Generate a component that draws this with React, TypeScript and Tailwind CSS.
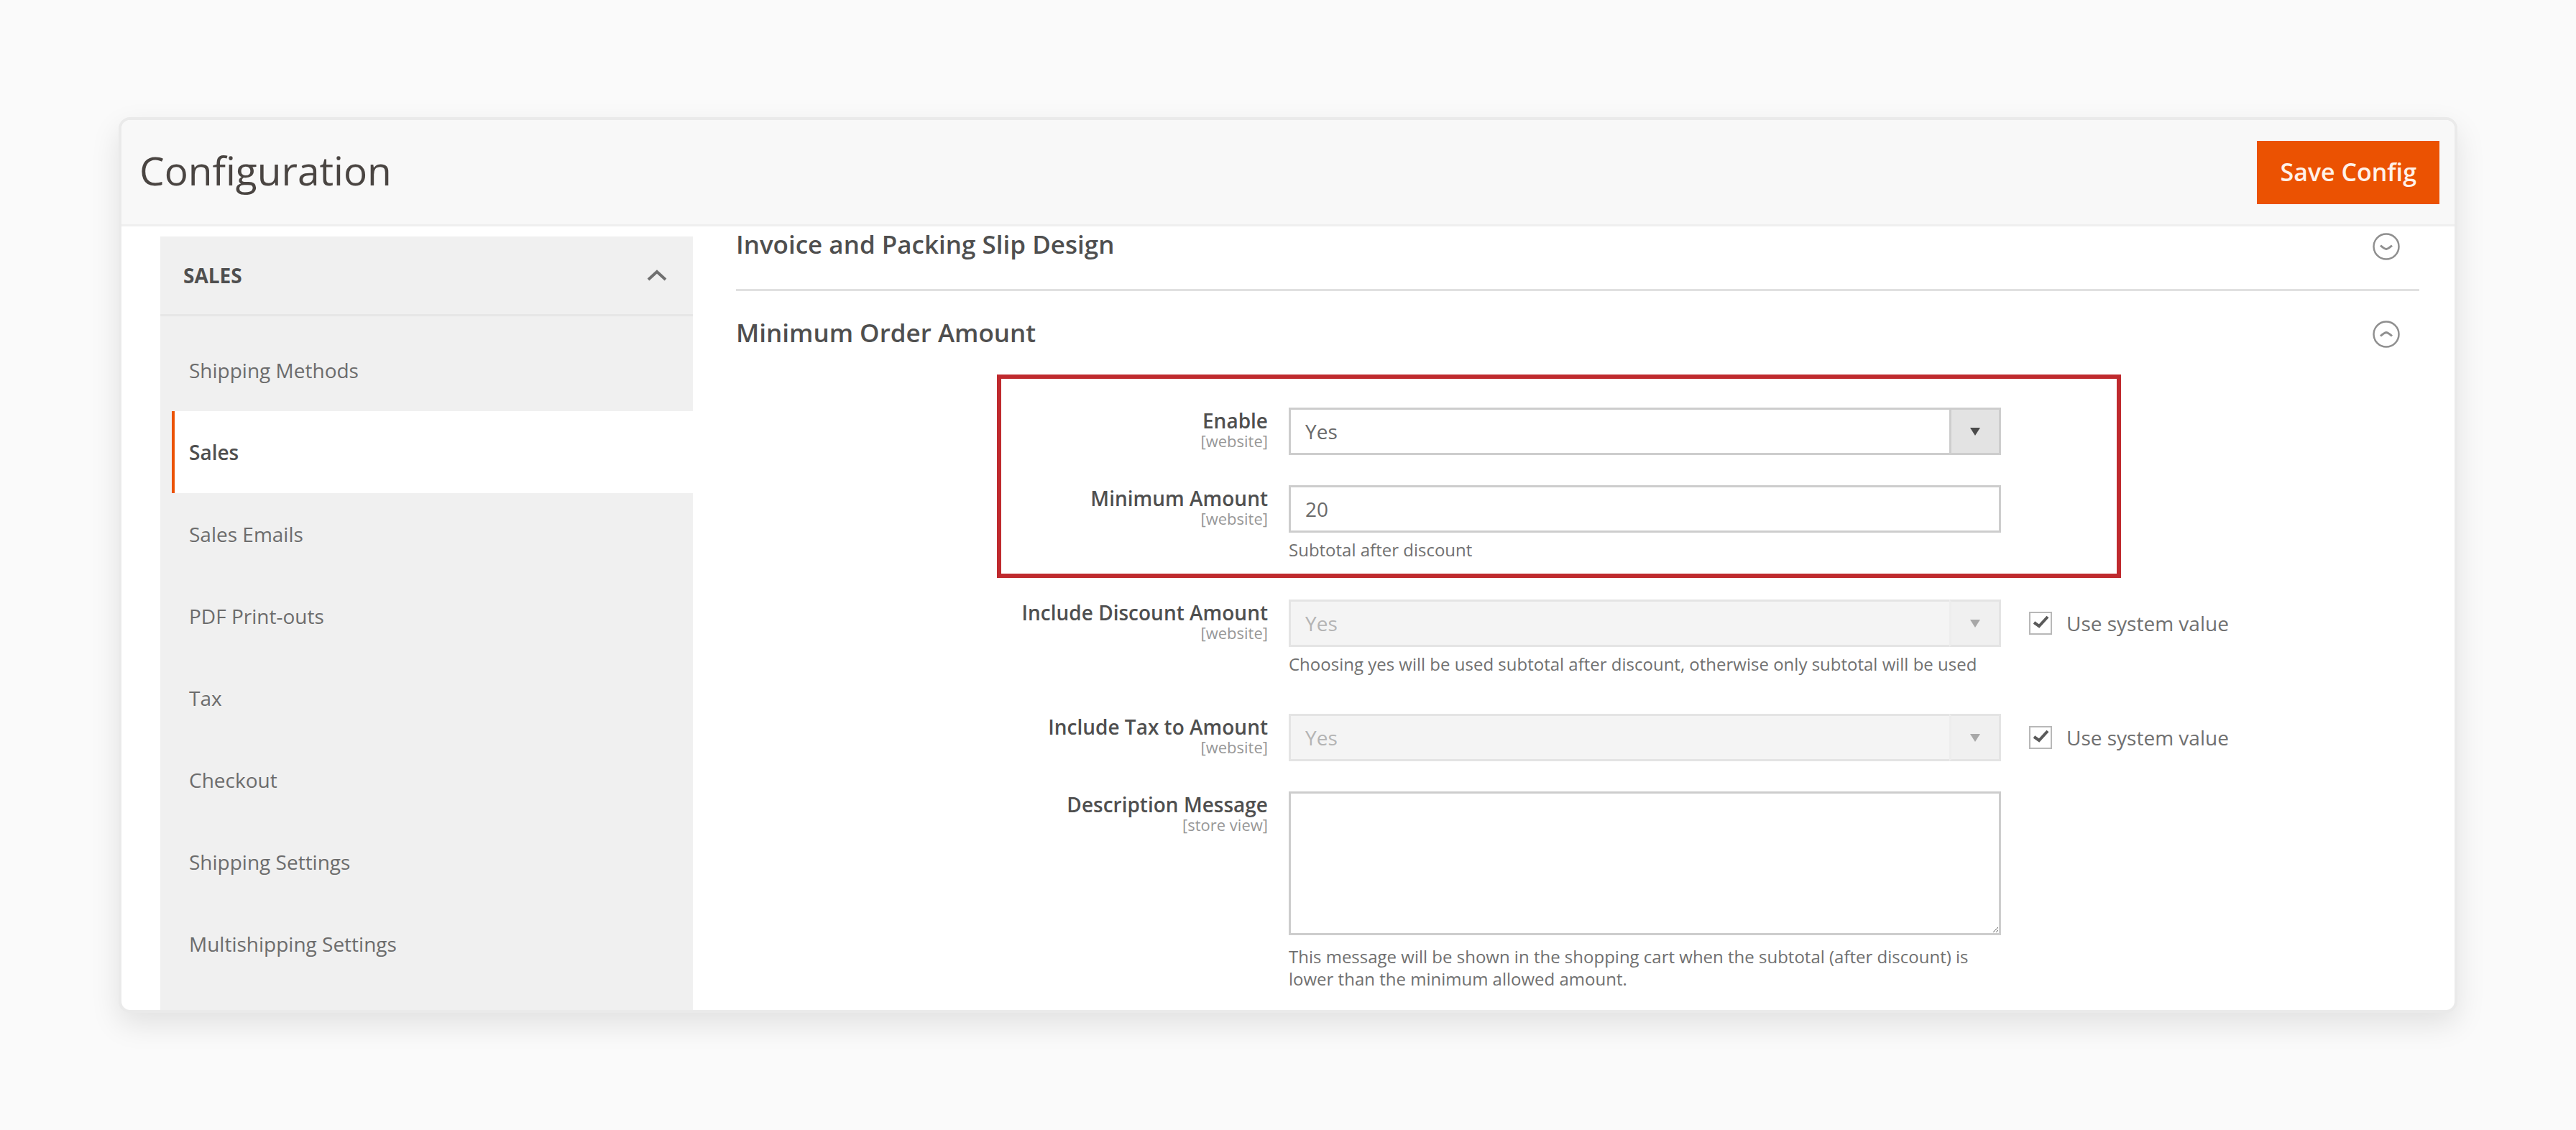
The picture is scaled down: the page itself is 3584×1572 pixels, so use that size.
import React from 'react';

interface FieldProps {
  id: string;
  label: string;
  scope: string;
  note?: string;
  system?: boolean;
  children: React.ReactNode;
}

const sections = [
  { label: 'Shipping Methods', active: false },
  { label: 'Sales', active: true },
  { label: 'Sales Emails', active: false },
  { label: 'PDF Print-outs', active: false },
  { label: 'Tax', active: false },
  { label: 'Checkout', active: false },
  { label: 'Shipping Settings', active: false },
  { label: 'Multishipping Settings', active: false },
];

const CircleChevron = ({ up }: { up?: boolean }) => (
  <svg className="size-10 shrink-0" viewBox="0 0 40 40" fill="none" stroke="#8f8f8f">
    <circle cx="20" cy="20" r="17.5" strokeWidth="2.5" />
    <path d={up ? 'M12 22.5 Q17 18 20 17.5 Q23 18 28 22.5' : 'M12 18.5 Q17 23 20 23.5 Q23 23 28 18.5'} strokeWidth="3" />
  </svg>
);

const Field = ({ id, label, scope, note, system, children }: FieldProps) => (
  <div className="grid grid-cols-[740fr_991fr_553fr] gap-x-[29px]">
    <label htmlFor={id} className="flex flex-col pt-1 text-right">
      <span className="text-[28px] leading-7 font-semibold text-[#4f4f4f]">{label}</span>
      <span className="text-[22px] leading-7 text-[#979797]">[{scope}]</span>
    </label>
    <div>
      {children}
      {note && <p className="pt-2 pb-3 text-[24px] leading-[31px] text-[#707070]">{note}</p>}
    </div>
    {system && (
      <label className="flex h-[66px] items-center gap-5 pl-2.5 text-[28px] text-[#707070]">
        <span className="relative flex size-[32px]">
          <input type="checkbox" defaultChecked className="size-[32px] appearance-none border-2 border-[#b8b8b8] bg-white" />
          <svg className="pointer-events-none absolute inset-0 size-[32px]" viewBox="0 0 32 32" fill="none" stroke="#5a5a5a" strokeWidth="4">
            <path d="M7 15 L14 20 L26 7" />
          </svg>
        </span>
        Use system value
      </label>
    )}
  </div>
);

const YesNoSelect = ({ id, disabled }: { id: string; disabled?: boolean }) => (
  <div className="relative">
    <select
      id={id}
      disabled={disabled}
      defaultValue="Yes"
      className={`block h-[66px] w-full appearance-none border-[3px] px-5 text-[28px] opacity-100 ${
        disabled ? 'border-[#e4e4e4] bg-[#f4f4f4] text-[#b4b4b4]' : 'border-[#cdcdcd] bg-white text-[#6a6a6a]'
      }`}
    >
      <option>Yes</option>
      <option>No</option>
    </select>
    <span
      className={`pointer-events-none absolute inset-y-0 right-0 flex w-[72px] items-center justify-center border-[3px] ${
        disabled ? 'border-[#e4e4e4] border-l-[#ededed] bg-[#f0f0f0] text-[#a8a8a8]' : 'border-[#cdcdcd] bg-[#e3e3e3] text-[#4a4a4a]'
      }`}
    >
      <svg className="h-3 w-4" viewBox="0 0 16 12" fill="currentColor">
        <path d="M1 1 H15 L8 12 Z" />
      </svg>
    </span>
  </div>
);

const App: React.FC = () => {
  return (
    <div className="flex min-h-screen bg-[#fafafa] px-[165px] py-[163px] font-['Open_Sans',sans-serif]">
      <div className="flex flex-1 flex-col overflow-hidden rounded-2xl border-4 border-[#eaeaea] bg-white shadow-[0_16px_40px_rgba(0,0,0,0.1)]">
        <header className="flex h-[148px] items-center justify-between border-b-[3px] border-[#efefef] bg-[#f8f8f8] pr-[21px] pl-[25px]">
          <h1 className="pb-1 text-[55px] text-[#4a4542]">Configuration</h1>
          <button className="h-[88px] bg-[#eb5202] px-8 text-[34px] font-semibold text-[#fff1e8]">Save Config</button>
        </header>

        <div className="grid flex-1 grid-cols-[741fr_2342fr] gap-[60px] pr-[49px] pl-[54px]">
          <nav className="mt-3.5 bg-[#f0f0f0]">
            <button className="flex h-[111px] w-full items-center justify-between border-b-[3px] border-[#e6e6e6] pr-9 pl-8 text-[28px] font-bold text-[#4f4f4f]">
              SALES
              <svg className="h-4 w-7" viewBox="0 0 28 16" fill="none" stroke="#707070" strokeWidth="4">
                <path d="M2 14 L14 3 L26 14" />
              </svg>
            </button>
            <div className="pt-[18px] pl-4">
              {sections.map((item) => (
                <a
                  key={item.label}
                  href="#"
                  className={`flex h-[114px] items-center border-l-4 pl-5 text-[28px] ${
                    item.active
                      ? 'border-[#eb5202] bg-white font-semibold text-[#4f4f4f]'
                      : 'border-transparent text-[#6c6c6c]'
                  }`}
                >
                  {item.label}
                </a>
              ))}
            </div>
          </nav>

          <main className="flex flex-col">
            <button className="flex h-[90px] w-full items-center justify-between border-b-[3px] border-[#e0e0e0] pr-[26px] pb-8 text-[35px] font-semibold text-[#4f4f4f]">
              <span className="pb-1">Invoice and Packing Slip Design</span>
              <CircleChevron />
            </button>
            <button className="flex h-[120px] w-full items-center justify-between pr-[26px] text-[35px] font-semibold text-[#4f4f4f]">
              <span className="pb-1">Minimum Order Amount</span>
              <CircleChevron up />
            </button>

            <div className="flex flex-col gap-[42px] pt-[42px] pb-4">
              <div className="relative flex flex-col gap-[42px]">
                <div className="pointer-events-none absolute -top-[46px] right-[17.7%] -bottom-3 left-[15.5%] border-[6px] border-[#bf2a2e]" />
                <Field id="enable" label="Enable" scope="website">
                  <YesNoSelect id="enable" />
                </Field>
                <Field id="amount" label="Minimum Amount" scope="website" note="Subtotal after discount">
                  <input
                    id="amount"
                    type="text"
                    defaultValue="20"
                    className="block h-[66px] w-full border-[3px] border-[#cdcdcd] bg-white px-5 text-[28px] text-[#6a6a6a]"
                  />
                </Field>
              </div>
              <Field
                id="discount"
                label="Include Discount Amount"
                scope="website"
                note="Choosing yes will be used subtotal after discount, otherwise only subtotal will be used"
                system
              >
                <YesNoSelect id="discount" disabled />
              </Field>
              <Field id="tax" label="Include Tax to Amount" scope="website" system>
                <YesNoSelect id="tax" disabled />
              </Field>
              <Field
                id="message"
                label="Description Message"
                scope="store view"
                note="This message will be shown in the shopping cart when the subtotal (after discount) is lower than the minimum allowed amount."
              >
                <textarea id="message" className="mb-1.5 block h-[200px] w-full border-[3px] border-[#cdcdcd] bg-white" />
              </Field>
            </div>
          </main>
        </div>
      </div>
    </div>
  );
};

export default App;
